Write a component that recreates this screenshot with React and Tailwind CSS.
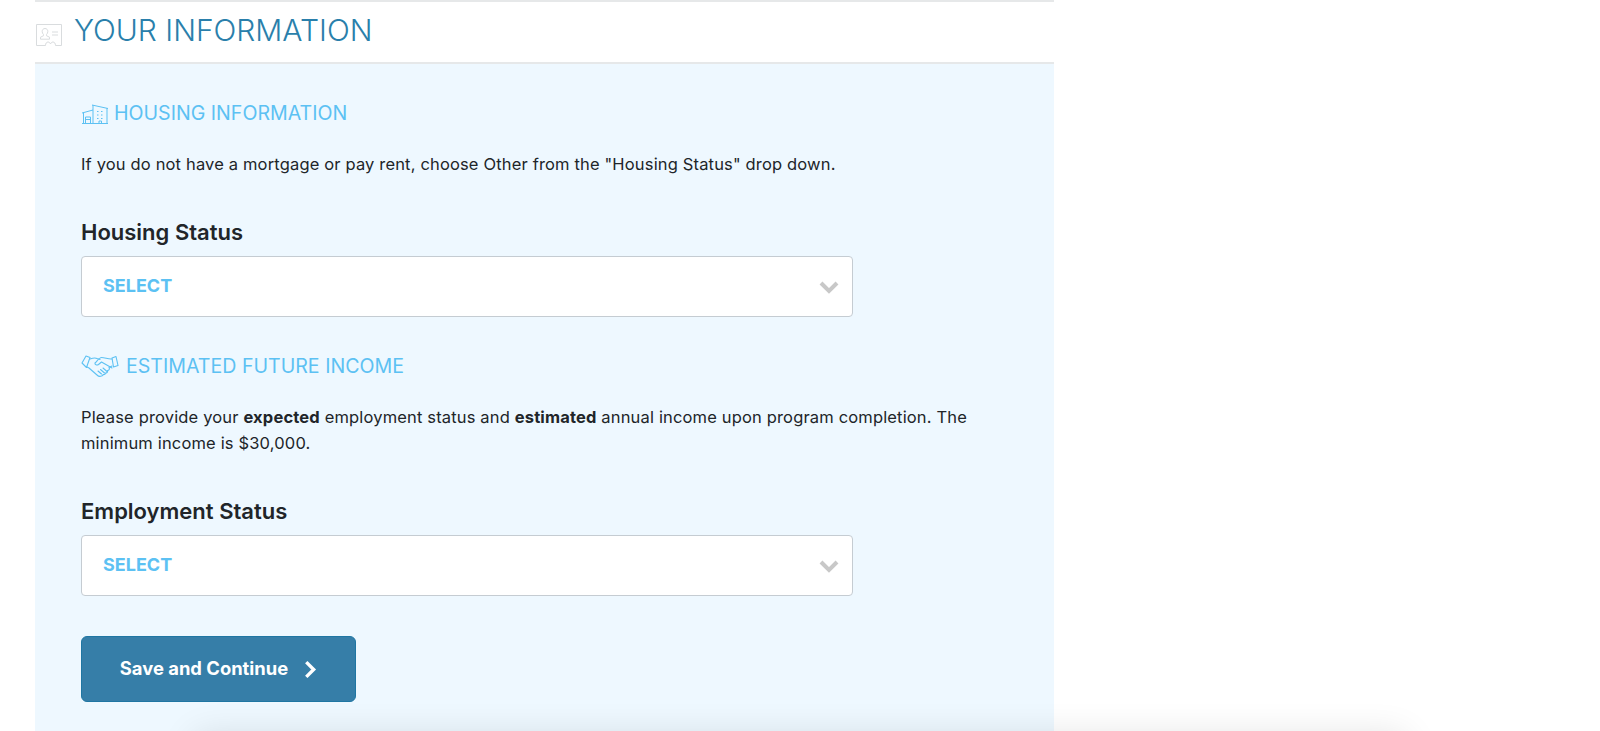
const Chevron = ({ className, strokeWidth = 4 }) => (
  <svg viewBox="0 0 20 14" className={className} fill="none" stroke="currentColor" strokeWidth={strokeWidth}>
    <path d="M2 3l8 8 8-8" />
  </svg>
);

const CardIcon = () => (
  <svg viewBox="0 0 28 24" className="w-[28px] h-[24px] shrink-0 text-[#d9dcde]" fill="none" stroke="currentColor" strokeWidth="1">
    <path d="M1.500 1.500h25v21h-6c0-2-1-3.500-2.500-3.500s-2 1-2.500 2c-.5-1-1-2-2.500-2s-2.500 1.500-2.500 3.500h-9z" />
    <path d="M10 5.500c-1.800 0-2.800 1.300-2.800 3 0 1.300.5 2.300 1.300 3v1.200l-3 1.500v2h9v-2l-3-1.500v-1.200c.8-.7 1.300-1.700 1.300-3 0-1.700-1-3-2.800-3z" />
    <path d="M17 9h6M17 12h6" />
  </svg>
);

const BuildingIcon = () => (
  <svg viewBox="0 0 28 22" className="w-[28px] h-[22px] shrink-0 text-[#5cc1f3]" fill="none" stroke="currentColor" strokeWidth="1">
    <path d="M1 11l11-3M2.500 10.500v11M12 21.500V3M1 21.500h26M11 3l16 3.500M26 6v15.500" />
    <path d="M4.500 21v-6h5v6M4.500 17.500h5" />
    <path d="M16 9.500h1.500M20 9.500h1.500M16 13h1.500M20 13h1.500M16 16.500h1.500M20 16.500h1.500M18 21v-2h2.500v2" />
  </svg>
);

const HandshakeIcon = () => (
  <svg viewBox="0 0 38 24" className="w-[38px] h-[24px] shrink-0 text-[#5cc1f3]" fill="none" stroke="currentColor" strokeWidth="1.100" strokeLinejoin="round" strokeLinecap="round">
    <path d="M1 9l4-7 4 1.500L5.500 13.500z" />
    <path d="M37 11.500l-2-9-4 1.500 1.500 9z" />
    <path d="M9 5c3-1 5-1.500 7-.5l3 1M31 5c-3.500.5-7-1.500-10.500-1.500-2 0-4 3-6.500 5.500-.5 1.500 2 2.500 3.500 1.500l3-2.500 10.500 6" />
    <path d="M6 13l2 1 8 7c1.500 1.500 3.500 1.500 4.500 1 1 0 1.500-1 1.500-1.500 1.500.5 2.500-.5 2.500-1.500 1.500 0 2.500-1 2-2.500 1.500 0 2.500-1.500 1.500-3l3-1.500" />
    <path d="M17 17l3.500 3M19.500 15.500l4 3.500M22 14l4 3.500" />
  </svg>
);

const SelectBox = () => (
  <div className="flex items-center justify-between w-[772px] h-[61px] bg-white border border-[#c5ccd2] rounded-[4px] pl-[21px] pr-[13px]">
    <span className="text-[18px] font-bold text-[#5cc1f3] pb-[2px]">SELECT</span>
    <Chevron className="w-[20px] h-[14px] text-[#c8c8c8]" />
  </div>
);

export default function App() {
  return (
    <div className="relative w-[1600px] h-[731px] overflow-hidden bg-white text-[#212529] font-['Inter',sans-serif]">
      <div className="w-[1019px] ml-[35px] h-full">
        <header className="flex items-center h-[64px] border-t-2 border-b-2 border-[#e6e8e9] bg-white">
          <div className="mt-[6px]"><CardIcon /></div>
          <h1 className="ml-[11px] mb-[4px] text-[30px] font-light text-[#2a7fab] leading-none">YOUR INFORMATION</h1>
        </header>
        <main className="h-[667px] bg-[#eef8ff] pl-[46px] pt-[37px]">
          <div className="flex items-center gap-[5px] h-[24px]">
            <BuildingIcon />
            <h2 className="text-[19.600px] text-[#5cc1f3] leading-none pt-[2px]">HOUSING INFORMATION</h2>
          </div>
          <p className="mt-[26px] text-[16.500px] tracking-[0.16px] leading-[26px]">If you do not have a mortgage or pay rent, choose Other from the "Housing Status" drop down.</p>
          <h3 className="mt-[40px] text-[22px] font-semibold leading-[30px]">Housing Status</h3>
          <div className="mt-[9px]"><SelectBox /></div>
          <div className="flex items-center gap-[7px] h-[24px] mt-[37px]">
            <HandshakeIcon />
            <h2 className="text-[19.600px] text-[#5cc1f3] leading-none pt-[2px]">ESTIMATED FUTURE INCOME</h2>
          </div>
          <p className="mt-[26px] w-[900px] text-[16.500px] tracking-[0.16px] leading-[26px]">
            Please provide your <strong className="font-bold">expected</strong> employment status and <strong className="font-bold">estimated</strong> annual income upon program completion. The minimum income is $30,000.
          </p>
          <h3 className="mt-[40px] text-[22px] font-semibold leading-[30px]">Employment Status</h3>
          <div className="mt-[9px]"><SelectBox /></div>
          <button className="flex items-center justify-center gap-[16px] mt-[40px] w-[275px] h-[66px] bg-[#367ea8] border border-[#1f76a3] rounded-[6px] text-white text-[18.400px] font-bold">
            Save and Continue
            <svg viewBox="0 0 12 18" className="w-[13px] h-[19px]" fill="none" stroke="currentColor" strokeWidth="3.200"><path d="M2 2l7 7-7 7" /></svg>
          </button>
        </main>
      </div>
      <div className="absolute left-[195px] top-[736px] w-[1210px] h-[60px] shadow-[0_0_36px_rgba(0,0,0,0.12)]" />
    </div>
  );
}
